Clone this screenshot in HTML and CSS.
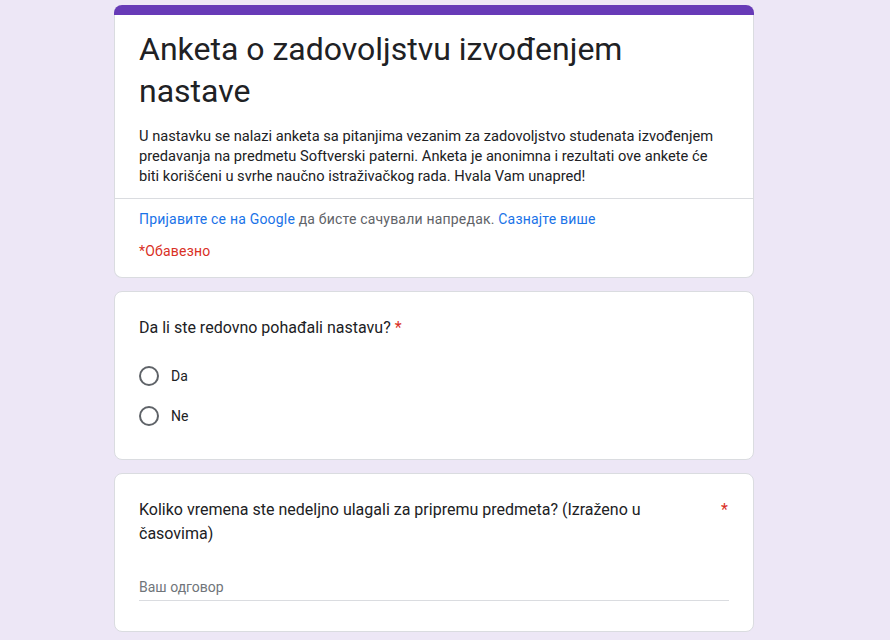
FILE: index.html
```html
<!DOCTYPE html>
<html lang="sr">
<head>
<meta charset="utf-8">
<title>Anketa o zadovoljstvu izvođenjem nastave</title>
<link rel="stylesheet" href="styles.css">
</head>
<body>
<main class="form">
  <section class="card header-card">
    <div class="strip"></div>
    <div class="header-main">
      <h1 class="title">Anketa o zadovoljstvu izvođenjem nastave</h1>
      <p class="desc">U nastavku se nalazi anketa sa pitanjima vezanim za zadovoljstvo studenata izvođenjem predavanja na predmetu Softverski paterni. Anketa je anonimna i rezultati ove ankete će biti korišćeni u svrhe naučno istraživačkog rada. Hvala Vam unapred!</p>
    </div>
    <div class="header-meta">
      <p class="signin"><a class="link" href="#">Пријавите се на Google</a> да бисте сачували напредак. <a class="link" href="#">Сазнајте више</a></p>
      <p class="required-note">*Обавезно</p>
    </div>
  </section>

  <section class="card question">
    <div class="q-title"><span>Da li ste redovno pohađali nastavu?</span> <span class="star">*</span></div>
    <div class="options">
      <label class="option"><span class="radio"></span><span class="opt-text">Da</span></label>
      <label class="option"><span class="radio"></span><span class="opt-text">Ne</span></label>
    </div>
  </section>

  <section class="card question">
    <div class="q-title q-title-split"><span class="q-text">Koliko vremena ste nedeljno ulagali za pripremu predmeta? (Izraženo u časovima)</span><span class="star">*</span></div>
    <div class="answer">Ваш одговор</div>
  </section>
</main>
</body>
</html>
```

FILE: styles.css
```css
* { box-sizing: border-box; }

html, body {
  margin: 0;
  padding: 0;
}

body {
  background: #ede7f6;
  font-family: Roboto, "Noto Sans", Arial, sans-serif;
  color: #202124;
  height: 640px;
  overflow: hidden;
}

.form {
  width: 640px;
  margin-left: 114px;
  padding-top: 5px;
}

.card {
  background: #fff;
  border: 1px solid #dadce0;
  border-radius: 8px;
  margin-bottom: 13px;
}

.header-card {
  border-top: none;
}

.strip {
  height: 10px;
  margin: 0 -1px;
  background: #673ab7;
  border-radius: 8px 8px 0 0;
}

.header-main {
  padding: 13px 24px 12px;
  border-bottom: 1px solid #dadce0;
}

.title {
  margin: 0;
  font-size: 32px;
  line-height: 42px;
  font-weight: 400;
  color: #202124;
}

.desc {
  margin: 14px 0 0;
  font-size: 11pt;
  line-height: 20px;
  color: #202124;
}

.header-meta {
  padding: 10px 24px 16px;
  font-size: 14px;
  line-height: 20px;
  letter-spacing: 0.2px;
}

.signin {
  margin: 0;
  color: #5f6368;
}

.link {
  color: #1a73e8;
  text-decoration: none;
}

.required-note {
  margin: 12px 0 0;
  color: #d93025;
}

.question {
  padding: 24px 24px 23px;
}

.q-title {
  font-size: 16px;
  line-height: 24px;
  color: #202124;
}

.star {
  color: #d93025;
}

.q-title-split {
  display: flex;
  justify-content: space-between;
  align-items: flex-start;
}

.q-text {
  width: 540px;
}

.q-title-split .star {
  margin-right: 1px;
}

.options {
  margin-top: 16px;
  display: flex;
  flex-direction: column;
}

.option {
  display: flex;
  align-items: center;
  height: 40px;
  gap: 12px;
  font-size: 14px;
  color: #202124;
}

.radio {
  width: 20px;
  height: 20px;
  border: 2px solid #5f6368;
  border-radius: 50%;
  flex: none;
}

.answer {
  margin-top: 31px;
  width: 590px;
  padding-bottom: 3px;
  border-bottom: 1px solid #dadce0;
  font-size: 14px;
  line-height: 20px;
  color: #70757a;
}

.question:last-child {
  padding-bottom: 30px;
}
```
